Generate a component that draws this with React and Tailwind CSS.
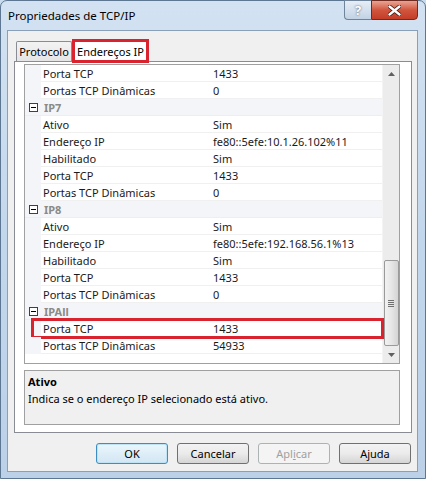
import React from "react";

const rows = [
  { type: "item", label: "Porta TCP", value: "1433" },
  { type: "item", label: "Portas TCP Dinâmicas", value: "0" },
  { type: "cat", label: "IP7" },
  { type: "item", label: "Ativo", value: "Sim" },
  { type: "item", label: "Endereço IP", value: "fe80::5efe:10.1.26.102%11" },
  { type: "item", label: "Habilitado", value: "Sim" },
  { type: "item", label: "Porta TCP", value: "1433" },
  { type: "item", label: "Portas TCP Dinâmicas", value: "0" },
  { type: "cat", label: "IP8" },
  { type: "item", label: "Ativo", value: "Sim" },
  { type: "item", label: "Endereço IP", value: "fe80::5efe:192.168.56.1%13" },
  { type: "item", label: "Habilitado", value: "Sim" },
  { type: "item", label: "Porta TCP", value: "1433" },
  { type: "item", label: "Portas TCP Dinâmicas", value: "0" },
  { type: "cat", label: "IPAll" },
  { type: "item", label: "Porta TCP", value: "1433", mark: true },
  { type: "item", label: "Portas TCP Dinâmicas", value: "54933" },
];

function MinusBox() {
  return (
    <div className="w-[9px] h-[9px] border border-[#404040] bg-white flex items-center justify-center">
      <div className="w-[5px] h-px bg-black" />
    </div>
  );
}

function Row({ row }) {
  if (row.type === "cat") {
    return (
      <div className="flex h-[17px] items-center bg-[#f4f5f8] border-b border-[#eceef2]">
        <div className="w-[16px] h-full flex items-center justify-center bg-[#f4f5f8]">
          <MinusBox />
        </div>
        <div className="pl-[3px] font-bold text-[#8a8a8a]">{row.label}</div>
      </div>
    );
  }
  return (
    <div className="relative flex h-[17px] items-center">
      <div className="w-[16px] h-full bg-[#f4f5f8]" />
      <div className="flex flex-1 h-full items-center border-b border-[#f0f0f0]">
        <div className="w-[172px] pl-[2px] text-[#1a1a1a]">{row.label}</div>
        <div className="flex-1 text-[#1a1a1a]">{row.value}</div>
      </div>
      {row.mark && (
        <div className="absolute left-[6px] right-[-2px] top-[-2px] bottom-[-2px] border-[3px] border-[#d9232e]" />
      )}
    </div>
  );
}

function ScrollBar() {
  return (
    <div className="w-[17px] h-full bg-[#ececec] flex flex-col items-center border-l border-[#f4f4f4]">
      <div className="h-[17px] flex items-center justify-center">
        <svg width="7" height="4" viewBox="0 0 7 4">
          <path d="M0 4 L3.5 0 L7 4 Z" fill="#606060" />
        </svg>
      </div>
      <div className="flex-1 w-full" />
      <div className="w-[15px] h-[86px] rounded-[2px] border border-[#9a9a9a] bg-gradient-to-r from-[#f2f2f2] via-[#e6e6e6] to-[#d4d4d4] flex items-center justify-center">
        <div className="flex flex-col gap-px">
          <div className="w-[6px] h-px bg-[#707070]" />
          <div className="w-[6px] h-px bg-[#707070]" />
          <div className="w-[6px] h-px bg-[#707070]" />
          <div className="w-[6px] h-px bg-[#707070]" />
        </div>
      </div>
      <div className="h-[17px] flex items-center justify-center">
        <svg width="7" height="4" viewBox="0 0 7 4">
          <path d="M0 0 L3.5 4 L7 0 Z" fill="#606060" />
        </svg>
      </div>
    </div>
  );
}

function Button({ children, primary, disabled }) {
  return (
    <div
      className={
        "w-[72px] h-[21px] rounded-[3px] border flex items-center justify-center " +
        (primary
          ? "border-[#3c8ec2] bg-gradient-to-b from-[#eaf6fd] to-[#d2e6f3] shadow-[inset_0_0_0_1px_#bfe3f5]"
          : disabled
          ? "border-[#adb2b5] bg-[#f4f4f4] text-[#a0a0a0]"
          : "border-[#707070] bg-gradient-to-b from-[#f2f2f2] via-[#ebebeb] to-[#d5d5d5]")
      }
    >
      {children}
    </div>
  );
}

export default function App() {
  return (
    <div
      className="w-[426px] h-[479px] overflow-hidden bg-[#c9dbee] text-[11px] leading-none"
      style={{ fontFamily: '"Noto Sans", "Liberation Sans", sans-serif' }}
    >
      <div className="relative w-[426px] h-[479px] rounded-t-[7px] border border-[#5d7691] bg-gradient-to-b from-[#d3e2f2] via-[#c3d7ec] to-[#bcd1e8] flex flex-col">
        {/* title bar */}
        <div className="h-[29px] flex items-center pl-[7px] text-[11.5px] text-black">
          Propriedades de TCP/IP
        </div>
        <div className="absolute top-[-1px] right-[7px] flex">
          <div className="w-[27px] h-[20px] rounded-bl-[4px] border border-[#6f839a] border-r-0 bg-gradient-to-b from-[#e6eef7] to-[#c2d3e5] flex items-center justify-center">
            <span className="text-[13px] font-bold text-white [text-shadow:0_0_2px_#3b4a5c]">?</span>
          </div>
          <div className="w-[47px] h-[20px] rounded-br-[4px] border border-[#6e2b22] bg-gradient-to-b from-[#e8a493] via-[#d1553e] to-[#c43c26] flex items-center justify-center">
            <svg width="13" height="11" viewBox="0 0 13 11">
              <path d="M1.5 1.5 L11.5 9.5 M11.5 1.5 L1.5 9.5" stroke="#3a1a14" strokeWidth="4" strokeLinecap="round" />
              <path d="M1.5 1.5 L11.5 9.5 M11.5 1.5 L1.5 9.5" stroke="#ffffff" strokeWidth="2.4" strokeLinecap="round" />
            </svg>
          </div>
        </div>

        {/* client area */}
        <div className="ml-[6px] mr-[7px] h-[442px] border border-[#8aa0b8] bg-[#f0f0f0] flex flex-col">
          {/* tabs */}
          <div className="h-[30px] pl-[8px] flex items-end pt-[7px]">
            <div className="w-[56px] h-[20px] border border-[#898c95] border-b-0 bg-gradient-to-b from-[#f3f3f3] to-[#e5e5e5] flex items-center justify-center rounded-t-[2px]">
              Protocolo
            </div>
            <div className="relative h-[23px] w-[77px] bg-white border border-[#898c95] border-b-0 flex items-center justify-center -mb-px z-10">
              Endereços IP
              <div className="absolute inset-[-1px] border-[3px] border-[#d9232e]" />
            </div>
          </div>
          {/* tab page */}
          <div className="ml-[6px] w-[398px] h-[372px] border border-[#898c95] bg-white pt-[2px] pl-[9px]">
            <div className="w-[376px] h-[300px] border border-[#a0a0a0] flex">
              <div className="flex-1 flex flex-col">
                {rows.map((r, i) => (
                  <Row key={i} row={r} />
                ))}
              </div>
              <ScrollBar />
            </div>
            <div className="mt-[6px] w-[376px] h-[55px] border border-[#a0a0a0] bg-[#f0f0f0] pl-[3px] pt-[5px]">
              <div className="font-bold text-black">Ativo</div>
              <div className="mt-[6px] text-black">Indica se o endereço IP selecionado está ativo.</div>
            </div>
          </div>
          {/* buttons */}
          <div className="mt-[10px] pl-[88px] flex gap-[9px]">
            <Button primary>OK</Button>
            <Button>Cancelar</Button>
            <Button disabled>
              Apl<span className="underline">i</span>car
            </Button>
            <Button>Ajuda</Button>
          </div>
        </div>
      </div>
    </div>
  );
}
